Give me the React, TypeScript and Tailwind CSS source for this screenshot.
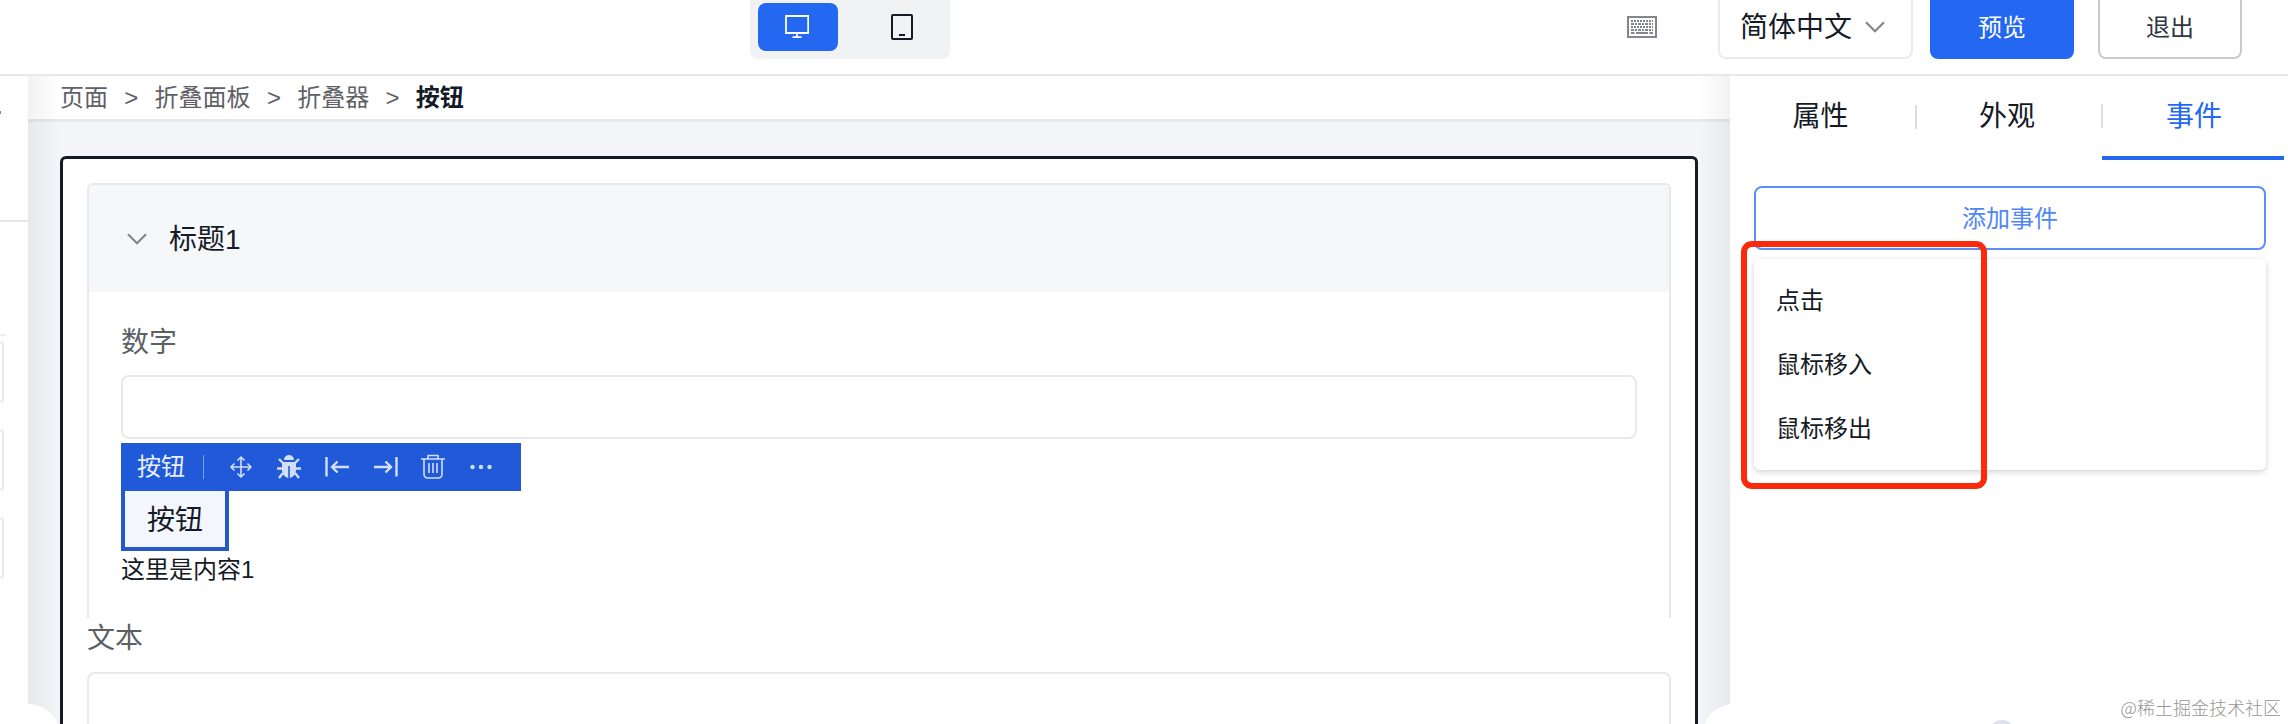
import React from "react";

const cjk = "font-['Liberation_Sans','Noto_Sans_CJK_SC',sans-serif]";

function Crumbs() {
  const items = ["页面", "折叠面板", "折叠器"];
  return (
    <nav className="relative flex h-[46px] shrink-0 items-center border-b-[3px] border-[#e8e8e8] bg-white pl-8 text-[24px] leading-none text-[#5f6166]">
      {items.map((t) => (
        <React.Fragment key={t}>
          <span>{t}</span>
          <span className="w-[46.6px] text-center text-[24px]">&gt;</span>
        </React.Fragment>
      ))}
      <span className="font-bold text-[#151b26]">按钮</span>
    </nav>
  );
}

function Chevron({ className }: { className: string }) {
  return (
    <svg viewBox="0 0 20 12" className={className} fill="none" stroke="currentColor" strokeWidth="2.2">
      <path d="M1 1.2 L10 10.2 L19 1.2" />
    </svg>
  );
}

function Header() {
  return (
    <header className="flex h-[76px] shrink-0 items-start border-b-2 border-[#e8e8e8] bg-white">
      <div className="ml-[750px] flex h-[59px] w-[200px] rounded-b-lg bg-[#f1f2f4] px-2 pt-[3px]">
        <div className="flex h-12 w-20 items-center justify-center rounded-lg bg-[#2468f2]">
          <svg viewBox="0 0 24 24" className="-ml-0.5 size-6" fill="none" stroke="#fff" strokeWidth="1.8">
            <path d="M1 1H23.2V18H1ZM12 18V22M7.5 22.2H16.5" />
          </svg>
        </div>
        <div className="flex h-12 flex-1 items-center justify-end pr-[29px]">
          <svg viewBox="0 0 22 26" className="h-[26px] w-[22px]" fill="none" stroke="#151b26" strokeWidth="2">
            <rect x="1" y="1" width="20" height="24" rx="1" />
            <path d="M8 21H14" />
          </svg>
        </div>
      </div>
      <svg viewBox="0 0 30 22" className="mt-4 ml-[677px] h-[22px] w-[30px]" fill="none" stroke="#84868c">
        <rect x="1" y="1" width="28" height="20" strokeWidth="2" />
        <path d="M4 5H26M4 11H26" strokeWidth="1.8" strokeDasharray="2 1" />
        <path d="M4 8H26M4 14H26" strokeWidth="1.8" strokeDasharray="3 1 2 1" />
        <path d="M4 17H7.5M9 17H21M22.5 17H26" strokeWidth="1.8" />
      </svg>
      <div className="ml-[61px] flex h-[59px] w-[195px] items-center rounded-b-lg border-2 border-t-0 border-[#ebebed] pb-[3px] pl-[20px] text-[28px] leading-none text-[#151b26]">
        <span className="relative top-px">简体中文</span>
        <Chevron className="ml-[13px] h-3 w-5 text-[#84868c]" />
      </div>
      <div className="ml-[17px] flex h-[59px] w-36 items-center justify-center rounded-b-lg bg-[#2468f2] pb-[4px] text-[24px] leading-none text-white">预览</div>
      <div className="ml-6 flex h-[59px] w-[144px] items-center justify-center rounded-b-lg border-2 border-t-0 border-[#c9cacd] pb-[2px] text-[24px] leading-none text-[#303540]">退出</div>
    </header>
  );
}

function LeftPanel() {
  return (
    <aside className="relative z-10 w-7 shrink-0 bg-white">
      <div className="mt-[144px] h-0.5 bg-[#e8e8e8]" />
      <div className="mt-[112px] h-0.5 w-1.5 bg-[#efeff0]" />
      <div className="mt-[5px] flex flex-col gap-[26px]">
        <div className="h-[62px] w-1 rounded-r-md border-2 border-l-0 border-[#e8e9eb]" />
        <div className="h-[62px] w-1 rounded-r-md border-2 border-l-0 border-[#e8e9eb]" />
        <div className="h-[62px] w-1 rounded-r-md border-2 border-l-0 border-[#e8e9eb]" />
      </div>
      <div className="absolute top-[35px] left-0 h-[3px] w-px bg-[#84868c]" />
      <div className="absolute top-[628px] -left-1 size-16 rounded-full bg-white" />
    </aside>
  );
}

function Toolbar() {
  return (
    <div className="flex h-12 w-[400px] items-center bg-[#205ad9] pl-4 text-[24px] leading-none text-[#e9effc]">
      <span className="-mt-px">按钮</span>
      <span className="ml-[18px] h-6 w-px bg-[#7c9de8]" />
      <svg viewBox="0 0 400 48" className="-ml-[83px] h-12 w-[400px] shrink-0" fill="none" stroke="#d2defa" strokeWidth="2.4">
        <g strokeWidth="1.6" strokeLinejoin="round">
          <path d="M110.500 24H130M120 14.500V33.500M116.500 17.500L120 14L123.500 17.500M116.500 30.500L120 34L123.500 30.500M113.500 20.500L110 24L113.500 27.500M126.500 20.500L130 24L126.500 27.500" />
        </g>
        <g stroke="none" fill="#d2defa">
          <path d="M163 17a5 5 0 0 1 10 0z" />
          <path d="M161 19H175V27a7 8 0 0 1-6.200 8V23H167.200V35A7 8 0 0 1 161 27Z" />
        </g>
        <path d="M162 20L158 16M174 20L178 16M162 25.500H156M174 25.500H180M162 30L158 35M174 30L178 35" strokeWidth="2.400" />
        <path d="M205.500 14V33.500M228 24H211M216.500 18.500L211 24L216.500 29.500" />
        <path d="M275.500 14V33.500M253 24H270M264.500 18.500L270 24L264.500 29.500" />
        <path d="M300 16H324M307 16V12.500H317V16M303 16V31Q303 35 307 35H317Q321 35 321 31V16M308 20V30M312 20V30M316 20V30" strokeWidth="1.600" />
        <g stroke="none" fill="#d2defa">
          <circle cx="351.500" cy="24" r="2.2" />
          <circle cx="360" cy="24" r="2.2" />
          <circle cx="368.500" cy="24" r="2.2" />
        </g>
      </svg>
    </div>
  );
}

function Canvas() {
  return (
    <main className="relative flex w-[1702px] shrink-0 flex-col overflow-hidden bg-[#f4f5f8]">
      <Crumbs />
      <div className="mx-8 mt-[34px] flex h-[620px] shrink-0 flex-col rounded-t-md border-[3px] border-b-0 border-[#151b26] bg-white px-6 pt-6">
        <section className="h-[435px] w-[1584px] shrink-0 rounded-t-md border-2 border-b-0 border-[#e8e9eb]">
          <div className="flex h-[107px] items-center rounded-t bg-[#f6f7f9] pl-[38px] text-[28px] leading-none text-[#151b26]">
            <Chevron className="h-3 w-5 text-[#84868c]" />
            <span className="mt-0.5 ml-[22px]">标题1</span>
          </div>
          <div className="px-8 text-[#151b26]">
            <div className="flex h-[83px] items-center pt-[18px] text-[28px] leading-none text-[#5c5f66]">数字</div>
            <div className="h-16 w-[1516px] rounded-lg border-2 border-[#e8e9eb]" />
            <div className="mt-1">
              <Toolbar />
            </div>
            <div className="flex h-[60px] w-[108px] items-center justify-center border-4 border-t-0 border-[#2559c6] bg-[#f3f6fd] pt-[3px] text-[28px] leading-none">按钮</div>
            <p className="mt-[7px] text-[24px] leading-[24px]">这里是内容1</p>
          </div>
        </section>
        <div className="mt-[7px] text-[28px] leading-[28px] text-[#5c5f66]">文本</div>
        <div className="mt-[19px] h-[70px] w-[1584px] shrink-0 rounded-t-lg border-2 border-b-0 border-[#e8e9eb]" />
      </div>
      <div className="absolute inset-y-0 left-0 w-8 bg-gradient-to-r from-black/5 to-transparent" />
      <div className="absolute inset-y-0 right-0 w-8 bg-gradient-to-l from-black/5 to-transparent" />
    </main>
  );
}

function RightPanel() {
  return (
    <aside className="relative flex-1 bg-white">
      <div className="absolute top-[628px] -left-7 size-16 rounded-full bg-white" />
      <div className="relative flex h-[84px] text-[28px] leading-none text-[#151b26]">
        <div className="flex w-[185px] items-center justify-center pb-[2px]">
          <span className="-ml-1">属性</span>
        </div>
        <div className="flex w-[187px] items-center pb-[2px]">
          <span className="h-6 w-0.5 bg-[#dcdde0]" />
          <span className="ml-[62px]">外观</span>
        </div>
        <div className="flex w-[182px] items-center border-b-4 border-[#2468f2] text-[#2468f2]">
          <span className="-ml-px h-6 w-0.5 bg-[#dcdde0]" />
          <span className="mt-0.5 ml-[63px]">事件</span>
        </div>
      </div>
      <div className="relative mt-[26px] ml-6 w-[512px]">
        <div className="flex h-16 items-center justify-center rounded-lg border-2 border-[#5b8ff5] pt-0.5 text-[24px] leading-none text-[#5086f5]">添加事件</div>
        <ul className="mt-[9px] flex h-[211px] flex-col rounded-md bg-white pt-[10px] pl-[22px] text-[24px] leading-[64px] text-[#151b26] shadow-[0_2px_6px_rgba(0,0,0,0.18)]">
          <li>点击</li>
          <li>鼠标移入</li>
          <li>鼠标移出</li>
        </ul>
        <div className="absolute top-[55px] -left-[13px] h-[248px] w-[246px] rounded-[11px] border-[6px] border-[#fa2a0b]" />
      </div>
      <div className="absolute top-[644px] left-[262px] h-1 w-5 overflow-hidden">
        <div className="-ml-1 h-7 w-7 rounded-full bg-[#dfe2ec]" />
      </div>
      <div className="absolute top-[619px] right-[7px] font-['Noto_Sans_CJK_SC',sans-serif] text-[18px] leading-[24px] font-light whitespace-nowrap text-[#969696]">@稀土掘金技术社区</div>
    </aside>
  );
}

export default function App() {
  return (
    <div className={`flex h-[724px] w-[2288px] flex-col overflow-hidden bg-white ${cjk}`}>
      <Header />
      <div className="flex min-h-0 flex-1">
        <LeftPanel />
        <Canvas />
        <RightPanel />
      </div>
    </div>
  );
}
